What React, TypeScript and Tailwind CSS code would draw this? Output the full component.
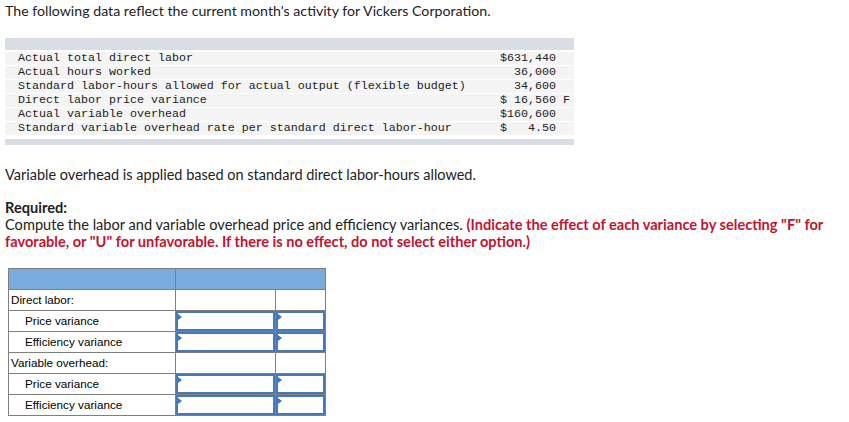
const dataRows: Array<{ label: string; value: string }> = [
  { label: "Actual total direct labor", value: "$631,440" },
  { label: "Actual hours worked", value: "  36,000" },
  { label: "Standard labor-hours allowed for actual output (flexible budget)", value: "  34,600" },
  { label: "Direct labor price variance", value: "$ 16,560 F" },
  { label: "Actual variable overhead", value: "$160,600" },
  { label: "Standard variable overhead rate per standard direct labor-hour", value: "$   4.50" },
];

const answerRows: Array<{ label: string; sub: boolean }> = [
  { label: "Direct labor:", sub: false },
  { label: "Price variance", sub: true },
  { label: "Efficiency variance", sub: true },
  { label: "Variable overhead:", sub: false },
  { label: "Price variance", sub: true },
  { label: "Efficiency variance", sub: true },
];

function InputCell() {
  return (
    <td className="h-[21px] border border-[#7f7f7f] p-0">
      <div className="relative h-[20px] w-full border-2 border-[#4679b5] bg-white">
        <span className="absolute left-0 top-[1px] h-0 w-0 border-y-[3px] border-l-[4px] border-y-transparent border-l-[#3b76c4]" />
      </div>
    </td>
  );
}

export default function App() {
  return (
    <div className="relative h-[422px] w-[849px] overflow-hidden bg-white font-['Lato','Liberation_Sans',sans-serif] text-[#222]">
      <p className="ml-[5px] pt-[3px] text-[14.2px] leading-[16px]">
        The following data reflect the current month's activity for Vickers Corporation.
      </p>

      <div className="ml-[5px] mt-[19px] w-[569px]">
        <div className="h-[12px] bg-[#d9dde5]" />
        <div className="flex flex-col gap-px pt-[2px] font-['Liberation_Mono',monospace] text-[11.67px] leading-[13px] text-[#222]">
          {dataRows.map((row) => (
            <div key={row.label} className="flex h-[13px] bg-[#f4f4f4]">
              <span className="w-[495px] whitespace-pre pl-[13px]">{row.label}</span>
              <span className="whitespace-pre">{row.value}</span>
            </div>
          ))}
        </div>
        <div className="mt-[4px] h-[6px] bg-[#d9dde5]" />
      </div>

      <p className="ml-[5px] mt-[22px] text-[14.5px] leading-[16px]">
        Variable overhead is applied based on standard direct labor-hours allowed.
      </p>

      <div className="ml-[5px] mt-[16px] pr-[10px] text-[14.6px] leading-[17px]">
        <p className="font-bold">Required:</p>
        <p>
          Compute the labor and variable overhead price and efficiency variances.{" "}
          <span className="font-bold text-[#c4122f]">
            (Indicate the effect of each variance by selecting "F" for favorable, or "U" for
            unfavorable. If there is no effect, do not select either option.)
          </span>
        </p>
      </div>

      <table className="ml-[8px] mt-[18px] border-collapse font-['Liberation_Sans',Arial,sans-serif] text-[11.7px] text-black">
        <colgroup>
          <col className="w-[167px]" />
          <col className="w-[100px]" />
          <col className="w-[50px]" />
        </colgroup>
        <thead>
          <tr>
            <th className="h-[21px] border border-[#7f7f7f] bg-[#78acdf]" />
            <th colSpan={2} className="h-[21px] border border-[#7f7f7f] bg-[#78acdf]" />
          </tr>
        </thead>
        <tbody>
          {answerRows.map((row, i) => (
            <tr key={i}>
              <td className={`h-[21px] border border-[#7f7f7f] p-0 leading-[14px] ${row.sub ? "pl-[16px]" : "pl-[2px]"}`}>
                {row.label}
              </td>
              {row.sub ? (
                <>
                  <InputCell />
                  <InputCell />
                </>
              ) : (
                <>
                  <td className="h-[21px] border border-[#7f7f7f]" />
                  <td className="h-[21px] border border-[#7f7f7f]" />
                </>
              )}
            </tr>
          ))}
        </tbody>
      </table>
    </div>
  );
}
